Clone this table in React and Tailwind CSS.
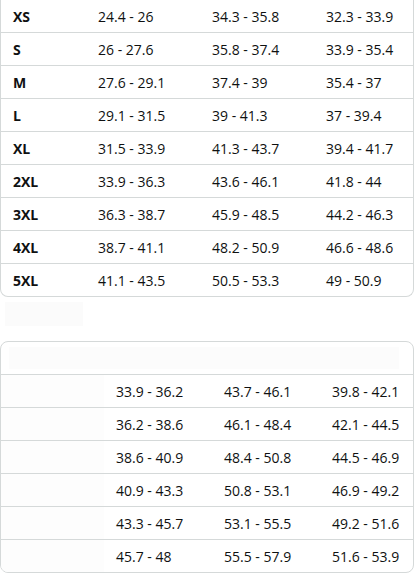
const sizes = [
  ["XS", "24.4 - 26", "34.3 - 35.8", "32.3 - 33.9"],
  ["S", "26 - 27.6", "35.8 - 37.4", "33.9 - 35.4"],
  ["M", "27.6 - 29.1", "37.4 - 39", "35.4 - 37"],
  ["L", "29.1 - 31.5", "39 - 41.3", "37 - 39.4"],
  ["XL", "31.5 - 33.9", "41.3 - 43.7", "39.4 - 41.7"],
  ["2XL", "33.9 - 36.3", "43.6 - 46.1", "41.8 - 44"],
  ["3XL", "36.3 - 38.7", "45.9 - 48.5", "44.2 - 46.3"],
  ["4XL", "38.7 - 41.1", "48.2 - 50.9", "46.6 - 48.6"],
  ["5XL", "41.1 - 43.5", "50.5 - 53.3", "49 - 50.9"],
];

const loading = [
  ["33.9 - 36.2", "43.7 - 46.1", "39.8 - 42.1"],
  ["36.2 - 38.6", "46.1 - 48.4", "42.1 - 44.5"],
  ["38.6 - 40.9", "48.4 - 50.8", "44.5 - 46.9"],
  ["40.9 - 43.3", "50.8 - 53.1", "46.9 - 49.2"],
  ["43.3 - 45.7", "53.1 - 55.5", "49.2 - 51.6"],
  ["45.7 - 48", "55.5 - 57.9", "51.6 - 53.9"],
];

export default function App() {
  return (
    <div className="w-[416px] h-[578px] bg-white overflow-hidden text-[14px] text-[#0f1111] font-['Open_Sans',sans-serif]">
      {/* size table */}
      <div className="w-[414px] border-x border-b border-[#d5d9d9] rounded-b-lg">
        {sizes.map((row, i) => (
          <div
            key={row[0]}
            className={
              "grid grid-cols-[85px_114px_114px_1fr] items-center " +
              (i < sizes.length - 1 ? "h-[33px] border-b border-[#d5d9d9]" : "h-[32px]")
            }
          >
            <div className="pl-3 font-bold">{row[0]}</div>
            <div className="pl-3">{row[1]}</div>
            <div className="pl-3">{row[2]}</div>
            <div className="pl-3">{row[3]}</div>
          </div>
        ))}
      </div>

      {/* title placeholder */}
      <div className="ml-[5px] mt-[5px] w-[78px] h-[24px] bg-[#fbfbfb]" />

      {/* second table, still loading */}
      <div className="mt-[15px] w-[414px] border border-[#d5d9d9] rounded-lg overflow-hidden">
        <div className="h-[33px] border-b border-[#d5d9d9] flex items-center px-2">
          <div className="w-[390px] h-[22px] bg-[#fcfcfc]" />
        </div>
        {loading.map((row, i) => (
          <div
            key={i}
            className={
              "grid grid-cols-[103px_108px_108px_1fr] items-center " +
              (i < loading.length - 1 ? "h-[33px] border-b border-[#d5d9d9]" : "h-[32px]")
            }
          >
            <div className="h-full bg-[#fdfdfd]" />
            <div className="pl-3">{row[0]}</div>
            <div className="pl-3">{row[1]}</div>
            <div className="pl-3">{row[2]}</div>
          </div>
        ))}
      </div>
    </div>
  );
}
